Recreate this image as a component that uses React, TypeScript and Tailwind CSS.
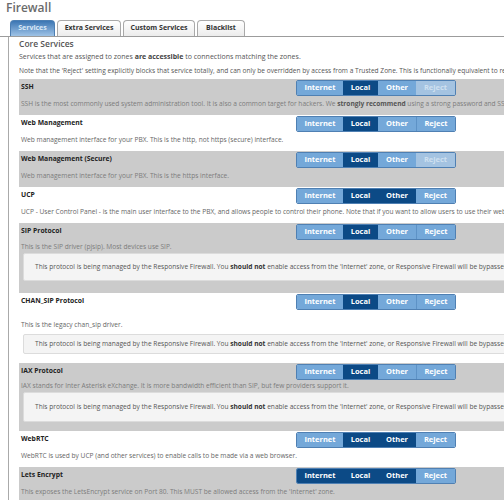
import React from 'react';

type Zone = 'on' | 'off' | 'faded';

interface Service {
  name: string;
  desc: React.ReactNode;
  zones: Zone[];
  grey: boolean;
  note?: boolean;
  variant?: 'sip' | 'chan' | 'iax';
}

const zoneNames = ['Internet', 'Local', 'Other', 'Reject'];
const zoneWidths = ['w-[46px]', 'w-[35px]', 'w-[38px]', 'w-[39px]'];

const services: Service[] = [
  {
    name: 'SSH',
    grey: true,
    zones: ['off', 'on', 'off', 'faded'],
    desc: (
      <>
        SSH is the most commonly used system administration tool. It is also a common target for hackers. We{' '}
        <b className="font-bold text-[#555]">strongly recommend</b> using a strong password and SSH keys.
      </>
    ),
  },
  {
    name: 'Web Management',
    grey: false,
    zones: ['off', 'on', 'off', 'off'],
    desc: 'Web management interface for your PBX. This is the http, not https (secure) interface.',
  },
  {
    name: 'Web Management (Secure)',
    grey: true,
    zones: ['off', 'on', 'off', 'faded'],
    desc: 'Web management interface for your PBX. This is the https interface.',
  },
  {
    name: 'UCP',
    grey: false,
    zones: ['off', 'on', 'on', 'off'],
    desc: 'UCP - User Control Panel - is the main user interface to the PBX, and allows people to control their phone. Note that if you want to allow users to use their webrtc phones, you must also enable WebRTC.',
  },
  {
    name: 'SIP Protocol',
    grey: true,
    zones: ['off', 'on', 'off', 'off'],
    note: true,
    variant: 'sip',
    desc: 'This is the SIP driver (pjsip). Most devices use SIP.',
  },
  {
    name: 'CHAN_SIP Protocol',
    grey: false,
    zones: ['off', 'on', 'off', 'off'],
    note: true,
    variant: 'chan',
    desc: 'This is the legacy chan_sip driver.',
  },
  {
    name: 'IAX Protocol',
    grey: true,
    zones: ['off', 'on', 'off', 'off'],
    note: true,
    variant: 'iax',
    desc: 'IAX stands for Inter Asterisk eXchange. It is more bandwidth efficient than SIP, but few providers support it.',
  },
  {
    name: 'WebRTC',
    grey: false,
    zones: ['off', 'on', 'on', 'off'],
    desc: 'WebRTC is used by UCP (and other services) to enable calls to be made via a web browser.',
  },
  {
    name: 'Lets Encrypt',
    grey: true,
    zones: ['on', 'on', 'on', 'off'],
    desc: "This exposes the LetsEncrypt service on Port 80. This MUST be allowed access from the 'Internet' zone.",
  },
];

const ZoneButtons: React.FC<{ zones: Zone[] }> = ({ zones }) => (
  <div className="flex h-[16px] rounded-[2px] border border-[#4f80b3] overflow-hidden">
    {zones.map((z, i) => (
      <div
        key={i}
        className={`${zoneWidths[i]} flex items-center justify-center text-[7.5px] font-bold ${
          z === 'on'
            ? 'bg-[#0c4a86] text-white'
            : z === 'faded'
            ? 'bg-[#a4c3e1] text-[#cfe0f0]'
            : 'bg-[#74a8d9] text-white'
        } ${i > 0 && zones[i - 1] === 'off' && z === 'off' ? 'border-l border-[#5d92c6]' : ''}`}
      >
        {zoneNames[i]}
      </div>
    ))}
  </div>
);

const ManagedNote: React.FC<{ className: string }> = ({ className }) => (
  <div className={`ml-[2px] bg-[#f4f4f4] border border-[#dcdcdc] rounded-[2px] pl-[11px] flex items-center text-[6.6px] text-[#555] ${className}`}>
    This protocol is being managed by the Responsive Firewall. You&nbsp;<b className="font-bold text-[#333]">should not</b>&nbsp;enable access from
    the 'Internet' zone, or Responsive Firewall will be bypassed.
  </div>
);

const ServiceRow: React.FC<{ s: Service }> = ({ s }) => {
  const descTop = s.variant === 'chan' ? 'mt-[10px]' : s.variant === 'iax' ? 'mt-[1px]' : s.variant === 'sip' ? 'mt-[2px]' : 'mt-[3px]';
  return (
    <div className={`${s.grey ? 'bg-[#cbcbcb]' : 'bg-white'} ${s.note ? (s.variant === 'iax' ? 'h-[68px]' : 'h-[70px]') : 'h-[36px]'} pl-[2px]`}>
      <div className="flex items-start pt-[1px]">
        <div className="w-[275px] pt-[1px] text-[6.8px] leading-[12px] font-bold text-[#222]">{s.name}</div>
        <ZoneButtons zones={s.zones} />
      </div>
      <div className={`${descTop} text-[6.6px] leading-[10px] ${s.grey ? 'text-[#7c7c7c]' : 'text-[#666]'}`}>{s.desc}</div>
      {s.variant === 'sip' && <ManagedNote className="mt-[1px] h-[28px]" />}
      {s.variant === 'chan' && <ManagedNote className="mt-[4px] h-[20px]" />}
      {s.variant === 'iax' && <ManagedNote className="mt-[1px] h-[30px]" />}
    </div>
  );
};

export default function App() {
  return (
    <div className="w-[504px] h-[500px] overflow-hidden bg-white font-['Open_Sans','Liberation_Sans',sans-serif] whitespace-nowrap">
      <div className="w-[900px]">
        <h1 className="pl-[6px] text-[12px] leading-[15px] font-semibold text-[#6b6b6b]">Firewall</h1>

        {/* Tabs */}
        <div className="mt-[5px] flex items-end gap-[2px] pl-[10px] border-b border-[#9c9c9c] h-[17px]">
          <div className="w-[45px] h-[16px] rounded-t-[4px] border border-b-0 border-[#4d7fb3] bg-gradient-to-b from-[#3b76b3] to-[#9fc3e6] text-[#d8e8f7] text-[7px] font-bold flex items-center justify-center">
            Services
          </div>
          {['Extra Services', 'Custom Services', 'Blacklist'].map((t, i) => (
            <div
              key={t}
              className={`${['w-[64px]', 'w-[72px]', 'w-[48px]'][i]} h-[16px] rounded-t-[4px] border border-b-0 border-[#a9a9a9] bg-gradient-to-b from-white to-[#ececec] text-[#333] text-[7px] font-bold flex items-center justify-center`}
            >
              {t}
            </div>
          ))}
        </div>

        {/* Panel */}
        <div className="ml-[8px] border-l border-[#aaaaaa] pl-[10px] pt-[1px]">
          <h2 className="text-[8.5px] leading-[12px] font-semibold text-[#555]">Core Services</h2>
          <p className="mt-[2px] text-[7px] leading-[10px] text-[#555]">
            Services that are assigned to zones <b className="font-bold text-[#444]">are accessible</b> to connections matching the zones.
          </p>
          <p className="mt-[4px] text-[6.6px] leading-[10px] text-[#555]">
            Note that the 'Reject' setting explicitly blocks that service totally, and can only be overridden by access from a Trusted Zone. This is
            functionally equivalent to removing it from every zone.
          </p>
          <div className="mt-[3px]">
            {services.map((s) => (
              <ServiceRow key={s.name} s={s} />
            ))}
          </div>
        </div>
      </div>
    </div>
  );
}
